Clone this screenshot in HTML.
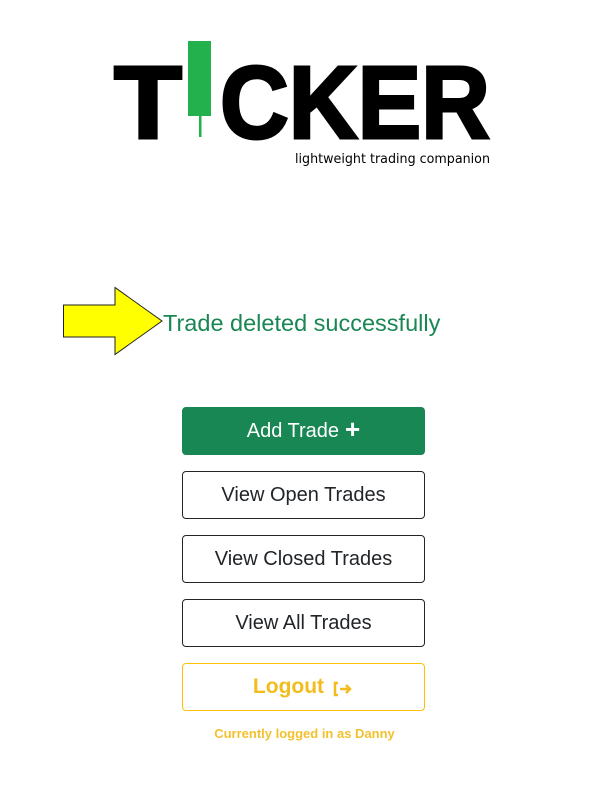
<!DOCTYPE html>
<html><head><style>
body{margin:0;background:#fff;width:609px;height:788px;position:relative;font-family:"Liberation Sans",Arial,sans-serif;overflow:hidden}
.btn{position:absolute;left:182px;width:243px;height:48px;box-sizing:border-box;border:1px solid #212529;border-radius:4px;display:flex;align-items:center;justify-content:center;font-size:20px;color:#212529}
</style></head><body>
<svg width="609" height="180" style="position:absolute;left:0;top:0">
<text x="114" y="138" font-family="Liberation Sans" font-weight="bold" font-size="103" fill="#000" stroke="#000" stroke-width="3" textLength="68" lengthAdjust="spacingAndGlyphs">T</text>
<rect x="188" y="41" width="23" height="75" fill="#22b14c"/>
<rect x="199" y="115" width="2.5" height="22" fill="#22b14c"/>
<text x="220" y="138" font-family="Liberation Sans" font-weight="bold" font-size="103" fill="#000" stroke="#000" stroke-width="3" textLength="270" lengthAdjust="spacingAndGlyphs">CKER</text>
<text x="295" y="163" font-family="DejaVu Sans" font-size="13" fill="#000" textLength="195" lengthAdjust="spacingAndGlyphs">lightweight trading companion</text>
</svg>
<svg width="110" height="75" style="position:absolute;left:60px;top:284px">
<polygon points="3.5,21 55,21 55,3.5 102,37 55,70.5 55,53 3.5,53" fill="#ffff00" stroke="#222" stroke-width="1"/>
</svg>
<div style="position:absolute;left:163px;top:310px;font-size:23.5px;color:#198754">Trade deleted successfully</div>
<div class="btn" style="top:407px;background:#198754;border-color:#198754;color:#fff">Add Trade <span style="font-size:26px;font-weight:bold;margin-left:6px;margin-top:-3px">+</span></div>
<div class="btn" style="top:471px">View Open Trades</div>
<div class="btn" style="top:535px">View Closed Trades</div>
<div class="btn" style="top:599px">View All Trades</div>
<div class="btn" style="top:663px;border-color:#ffc107;color:#f2bd1c;font-weight:bold;font-size:21px">Logout
<svg width="22" height="18" viewBox="0 0 22 18" style="margin-left:8px;margin-top:3px"><path d="M6 3H3v12h3" fill="none" stroke="#f2bd1c" stroke-width="2.5"/><path d="M8 9h10M14 5l4 4-4 4" fill="none" stroke="#f2bd1c" stroke-width="2.5"/></svg></div>
<div style="position:absolute;left:0;width:609px;top:726px;text-align:center;font-size:13px;font-weight:bold;color:#f2c12e">Currently logged in as Danny</div>
</body></html>
